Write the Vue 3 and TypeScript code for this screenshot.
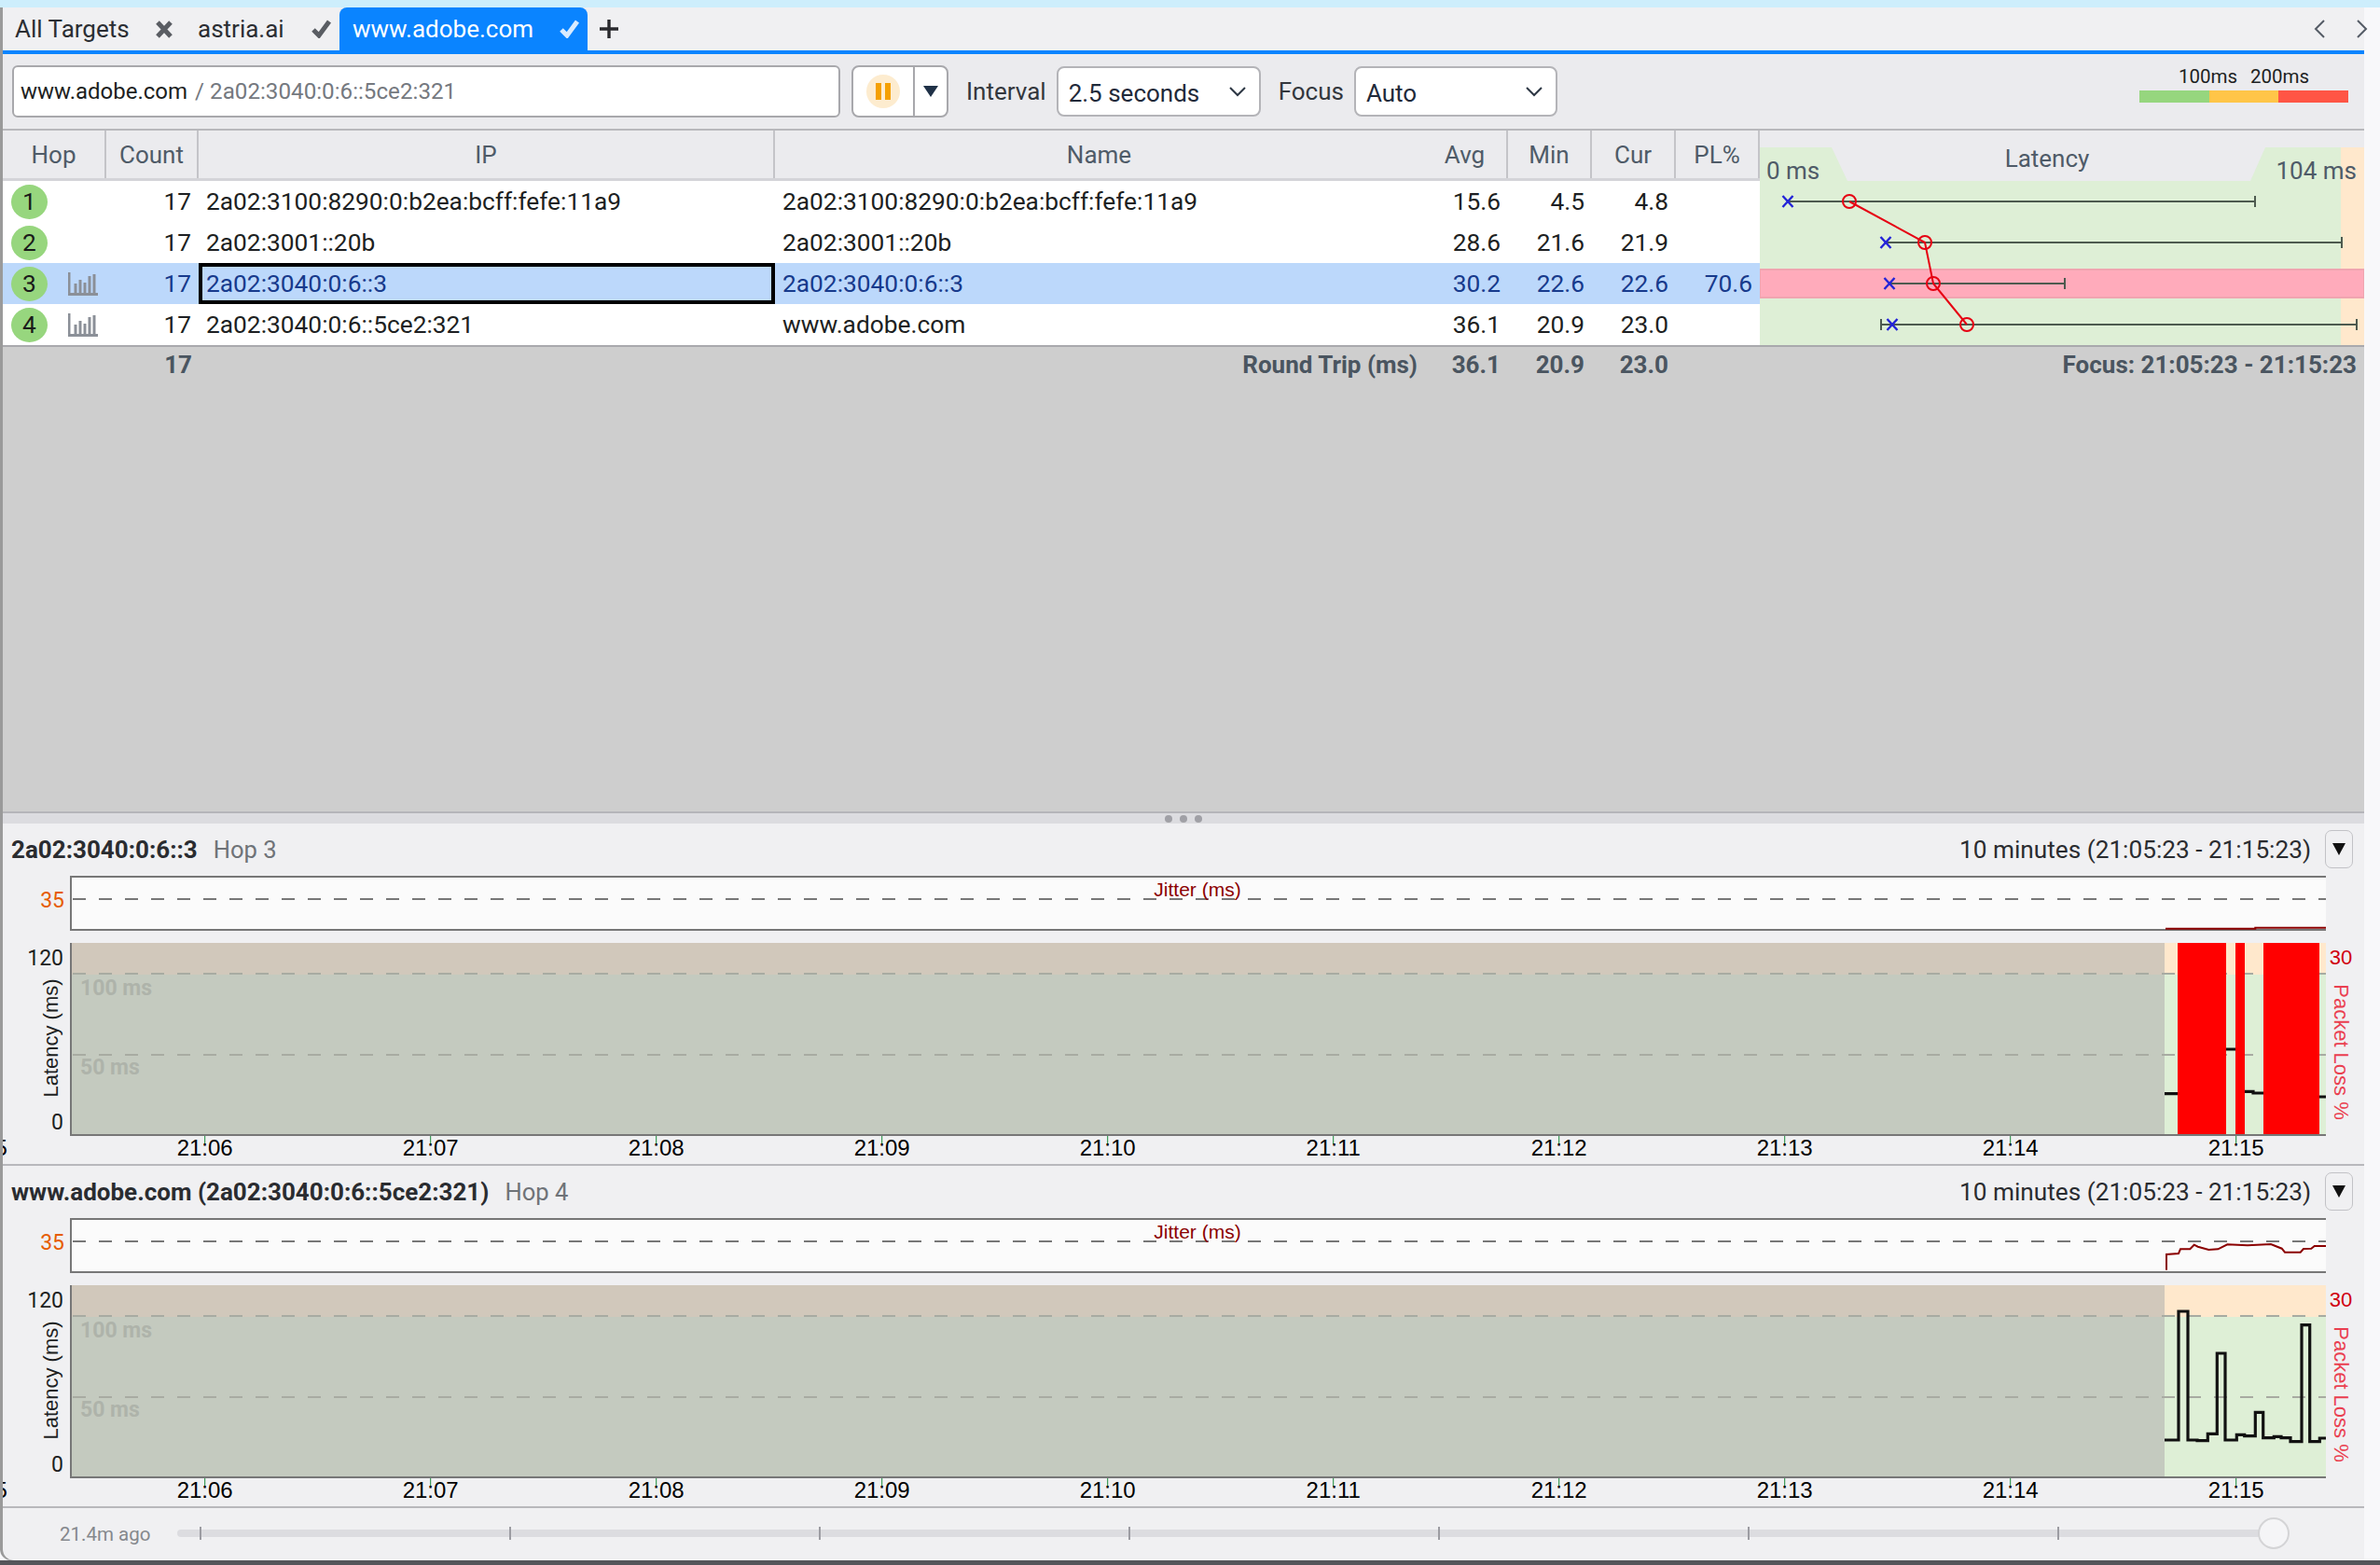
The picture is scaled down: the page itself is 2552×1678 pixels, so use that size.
<script setup lang="ts">
interface Hop {
  n: number
  chart: boolean
  count: number
  ip: string
  name: string
  avg: string
  min: string
  cur: string
  pl: string
  selected?: boolean
}

const hops: Hop[] = [
  { n: 1, chart: false, count: 17, ip: '2a02:3100:8290:0:b2ea:bcff:fefe:11a9', name: '2a02:3100:8290:0:b2ea:bcff:fefe:11a9', avg: '15.6', min: '4.5', cur: '4.8', pl: '' },
  { n: 2, chart: false, count: 17, ip: '2a02:3001::20b', name: '2a02:3001::20b', avg: '28.6', min: '21.6', cur: '21.9', pl: '' },
  { n: 3, chart: true, count: 17, ip: '2a02:3040:0:6::3', name: '2a02:3040:0:6::3', avg: '30.2', min: '22.6', cur: '22.6', pl: '70.6', selected: true },
  { n: 4, chart: true, count: 17, ip: '2a02:3040:0:6::5ce2:321', name: 'www.adobe.com', avg: '36.1', min: '20.9', cur: '23.0', pl: '' },
]

// latency bars in the table: y, low tick (optional), x mark, circle, high tick
const bars = [
  { y: 76, low: 0, x: 1917, c: 1983, high: 2418 },
  { y: 120, low: 0, x: 2022, c: 2064, high: 2511 },
  { y: 164, low: 0, x: 2026, c: 2073, high: 2214 },
  { y: 208, low: 2017, x: 2029, c: 2109, high: 2527 },
]

const trend = bars.map((b) => `${b.c},${b.y}`).join(' ')

const ticks = ['21:05', '21:06', '21:07', '21:08', '21:09', '21:10', '21:11', '21:12', '21:13', '21:14', '21:15'].map((t, i) => ({
  label: t,
  x: -22.3 + 242 * i,
}))

// points were read off 3x crops, so they stay in crop units from x=2200
const zx = (n: number) => 2200 + n / 3

const toPath = (pts: number[][], yBase: number) =>
  pts.map((p, i) => `${i ? 'L' : 'M'}${zx(p[0]).toFixed(1)} ${(yBase + p[1] / 3).toFixed(1)}`).join(' ')

const latency4 = [
  [363, 912], [408, 912], [408, 498], [438, 498], [438, 912], [468, 912], [468, 914], [502, 914], [502, 892], [532, 892],
  [532, 633], [558, 633], [558, 912], [595, 912], [595, 895], [620, 895], [620, 899], [655, 899], [655, 823], [680, 823],
  [680, 905], [715, 905], [715, 901], [738, 901], [738, 905], [768, 905], [768, 917], [804, 917], [804, 542], [830, 542],
  [830, 917], [862, 917], [862, 906], [882, 906],
]
const jitter4 = [
  [369, 365], [369, 315], [408, 312], [414, 298], [445, 298], [458, 284], [470, 290], [505, 300], [535, 298], [565, 283],
  [630, 286], [705, 282], [740, 296], [750, 308], [800, 308], [810, 297], [835, 296], [845, 288], [882, 288],
]
const latency3Segs = [
  [[363, 938], [405, 938]],
  [[561, 795], [591, 795]],
  [[621, 931], [648, 931], [648, 936], [681, 936]],
  [[861, 948], [882, 948]],
]
const jitter3 = [[366, 407], [655, 407], [655, 404], [882, 404]]

const panels = [
  {
    title: '2a02:3040:0:6::3',
    hop: 'Hop 3',
    jitter: toPath(jitter3, -78),
    latency: latency3Segs.map((s) => toPath(s, -78)).join(' '),
    lossBars: [
      { x: 2335, w: 52 },
      { x: 2397, w: 10 },
      { x: 2427, w: 60 },
    ],
  },
  {
    title: 'www.adobe.com (2a02:3040:0:6::5ce2:321)',
    hop: 'Hop 4',
    jitter: toPath(jitter4, -65),
    latency: toPath(latency4, -65),
    lossBars: [],
  },
]

const sliderTicks = [0, 1, 2, 3, 4, 5, 6].map((i) => 214 + 332 * i)
</script>

<template>
  <div class="page">
    <div class="top-strip"></div>
    <div class="app">
      <div class="tabbar">
        <div class="tab">
          <span>All Targets</span>
          <svg class="tab-icon" width="20" height="19" viewBox="0 0 20 19"><path d="m3 2 14 15M17 2 3 17" fill="none" stroke="#5a5d63" stroke-width="5" /></svg>
        </div>
        <div class="tab tab-second">
          <span>astria.ai</span>
          <svg class="tab-icon" width="23" height="20" viewBox="0 0 23 20"><path d="m3 11 6 6L20 2" fill="none" stroke="#5a5d63" stroke-width="5" /></svg>
        </div>
        <div class="tab tab-active">
          <span>www.adobe.com</span>
          <svg class="tab-icon" width="23" height="20" viewBox="0 0 23 20"><path d="m3 11 6 6L20 2" fill="none" stroke="#d8ebff" stroke-width="5" /></svg>
        </div>
        <svg class="tab-plus" width="22" height="22" viewBox="0 0 22 22"><path d="M11 1v20M1 11h20" stroke="#2a2a2e" stroke-width="3.4" /></svg>
        <div class="tab-arrows">
          <svg width="14" height="22" viewBox="0 0 14 22"><path d="M12 2 3 11l9 9" fill="none" stroke="#555c66" stroke-width="2" /></svg>
          <svg width="14" height="22" viewBox="0 0 14 22"><path d="m2 2 9 9-9 9" fill="none" stroke="#555c66" stroke-width="2" /></svg>
        </div>
      </div>

      <div class="toolbar">
        <div class="target-input"><span class="target-name">www.adobe.com</span><span class="target-ip"> / 2a02:3040:0:6::5ce2:321</span></div>
        <div class="pause-group">
          <div class="pause-btn"><span class="pause-glyph"><i></i><i></i></span></div>
          <div class="pause-drop"><span class="tri"></span></div>
        </div>
        <span class="tool-label">Interval</span>
        <div class="select select-interval">
          <span>2.5 seconds</span>
          <svg width="20" height="12" viewBox="0 0 20 12"><path d="m2 2 8 8 8-8" fill="none" stroke="#2d3744" stroke-width="2" /></svg>
        </div>
        <span class="tool-label">Focus</span>
        <div class="select select-focus">
          <span>Auto</span>
          <svg width="20" height="12" viewBox="0 0 20 12"><path d="m2 2 8 8 8-8" fill="none" stroke="#2d3744" stroke-width="2" /></svg>
        </div>
        <div class="legend">
          <div class="legend-labels"><span>100ms</span><span>200ms</span></div>
          <div class="legend-bar"><i class="lg-green"></i><i class="lg-orange"></i><i class="lg-red"></i></div>
        </div>
      </div>

      <div class="table-area">
        <div class="table-wrap">
          <div class="table-left">
            <div class="trow thead">
              <div class="th">Hop</div>
              <div class="th">Count</div>
              <div class="th">IP</div>
              <div class="th th-name">Name</div>
              <div class="th">Avg</div>
              <div class="th">Min</div>
              <div class="th">Cur</div>
              <div class="th th-last">PL%</div>
            </div>
            <div v-for="h in hops" :key="h.n" class="trow tbody" :class="{ selected: h.selected }">
              <div class="td td-hop">
                <span class="badge">{{ h.n }}</span>
                <svg v-if="h.chart" class="bars-icon" width="32" height="25" viewBox="0 0 32 25">
                  <path d="M1 0v23.5h31M8 12v10M13 8v14M18 11v11M23 4v18M28 2v20" fill="none" stroke="#8b9098" stroke-width="3" />
                </svg>
              </div>
              <div class="td num">{{ h.count }}</div>
              <div class="td td-ip" :class="{ focused: h.selected }">{{ h.ip }}</div>
              <div class="td td-ip">{{ h.name }}</div>
              <div class="td num">{{ h.avg }}</div>
              <div class="td num">{{ h.min }}</div>
              <div class="td num">{{ h.cur }}</div>
              <div class="td num">{{ h.pl }}</div>
            </div>
          </div>
          <svg class="latency" width="648" height="232" viewBox="1887 0 648 232">
            <rect x="1887" y="0" width="648" height="54" fill="#ebebee" />
            <path d="M1887 18H1964L1981 54H1887Z" fill="#deefd6" />
            <path d="M2429 18H2510V54H2413Z" fill="#deefd6" />
            <rect x="2510" y="18" width="25" height="212" fill="#ffe8cc" />
            <rect x="1887" y="54" width="623" height="176" fill="#deefd6" />
            <rect x="1887" y="149" width="648" height="30" fill="#ffabbb" stroke="#f0a5b0" stroke-width="2" />
            <text x="2195" y="39" class="lat-title" text-anchor="middle">Latency</text>
            <text x="1894" y="52" class="lat-scale">0 ms</text>
            <text x="2527" y="52" class="lat-scale" text-anchor="end">104 ms</text>
            <g v-for="b in bars" :key="b.y">
              <path :d="`M${b.low || b.x} ${b.y}H${b.high}M${b.high} ${b.y - 6}v12`" stroke="#4d5a4f" stroke-width="2" fill="none" />
              <path v-if="b.low" :d="`M${b.low} ${b.y - 6}v12`" stroke="#4d5a4f" stroke-width="2" fill="none" />
              <path :d="`M${b.x - 5.5} ${b.y - 6}l11 12m0 -12l-11 12`" stroke="#2323d8" stroke-width="2.4" fill="none" />
            </g>
            <polyline :points="trend" fill="none" stroke="#e60012" stroke-width="2" />
            <circle v-for="b in bars" :key="'c' + b.y" :cx="b.c" :cy="b.y" r="7" fill="none" stroke="#e60012" stroke-width="2" />
          </svg>
        </div>
        <div class="summary">
          <span class="sum-count">17</span>
          <span class="sum-label">Round Trip (ms)</span>
          <span class="sum-num">36.1</span>
          <span class="sum-num">20.9</span>
          <span class="sum-num">23.0</span>
          <span class="sum-focus">Focus: 21:05:23 - 21:15:23</span>
        </div>
        <div class="empty"></div>
      </div>

      <div class="splitter"><i></i><i></i><i></i></div>

      <div v-for="p in panels" :key="p.hop" class="panel">
        <div class="panel-head">
          <span class="panel-title">{{ p.title }}</span>
          <span class="panel-hop">{{ p.hop }}</span>
          <span class="panel-range">10 minutes (21:05:23 - 21:15:23)</span>
          <span class="panel-btn"><span class="tri tri-big"></span></span>
        </div>
        <svg class="chart" width="2532" height="310" viewBox="3 0 2532 310">
          <!-- jitter strip -->
          <rect x="75" y="2" width="2419" height="57" fill="#fbfbfb" />
          <path d="M75 2H2494M75 59H2494M76 2V59" fill="none" stroke="#777" stroke-width="2" />
          <line x1="78" y1="26" x2="2494" y2="26" stroke="#777" stroke-width="2" stroke-dasharray="14 14" />
          <text x="1284" y="23" class="jitter-label" text-anchor="middle">Jitter (ms)</text>
          <text x="69" y="35" class="jitter-val" text-anchor="end">35</text>
          <path :d="p.jitter" fill="none" stroke="#8b0000" stroke-width="2" />

          <!-- latency area -->
          <rect x="75" y="73" width="2246" height="34" fill="#d1c8bb" />
          <rect x="75" y="107" width="2246" height="171" fill="#c4cabf" />
          <rect x="2321" y="73" width="173" height="34" fill="#ffe8cc" />
          <rect x="2321" y="107" width="173" height="171" fill="#deefd6" />
          <line x1="78" y1="106" x2="2494" y2="106" stroke="#a8aba2" stroke-width="2" stroke-dasharray="14 14" />
          <line x1="78" y1="193" x2="2494" y2="193" stroke="#a8aba2" stroke-width="2" stroke-dasharray="14 14" />
          <text x="86" y="129" class="grid-label">100 ms</text>
          <text x="86" y="214" class="grid-label">50 ms</text>
          <rect v-for="b in p.lossBars" :key="b.x" :x="b.x" y="73" :width="b.w" height="205" fill="#ff0000" />
          <path :d="p.latency" fill="none" stroke="#111" stroke-width="3.2" />
          <path d="M76 73V279H2494" fill="none" stroke="#777" stroke-width="2" />

          <text x="68" y="97" class="axis" text-anchor="end">120</text>
          <text x="68" y="273" class="axis" text-anchor="end">0</text>
          <text transform="translate(62 175) rotate(-90)" class="axis-title" text-anchor="middle">Latency (ms)</text>
          <text x="2510" y="96" class="loss-max" text-anchor="middle">30</text>
          <text transform="translate(2503 190) rotate(90)" class="loss-title" text-anchor="middle">Packet Loss %</text>

          <g v-for="t in ticks" :key="t.label">
            <line :x1="t.x" y1="280" :x2="t.x" y2="289" stroke="#1a8a3a" stroke-width="1" />
            <text :x="t.x" y="301" class="tick" text-anchor="middle">{{ t.label }}</text>
          </g>
        </svg>
      </div>

      <div class="slider-row">
        <span class="slider-label">21.4m ago</span>
        <div class="slider-track">
          <i v-for="x in sliderTicks" :key="x" class="slider-tick" :style="{ left: x - 190 + 'px' }"></i>
          <span class="slider-handle"></span>
        </div>
      </div>
    </div>
    <div class="bottom-strip"></div>
  </div>
</template>

<style>
html,
body {
  margin: 0;
  background: #f8f8fa;
  overflow: hidden;
}
</style>

<style scoped>
.page {
  width: 2552px;
  height: 1678px;
  display: flex;
  flex-direction: column;
  font-family: Roboto, 'Liberation Sans', sans-serif;
  color: #1d1f22;
  background: #f8f8fa;
  overflow: hidden;
}

.top-strip {
  height: 8px;
  flex: none;
  background: #cdeefc;
}

.app {
  width: 2532px;
  height: 1665px;
  margin-left: 3px;
  flex: none;
  background: #f0f0f2;
  display: flex;
  flex-direction: column;
  box-shadow: -3px 0 0 #9a9a9a;
  border-bottom-left-radius: 12px;
}

.bottom-strip {
  flex: 1;
  background: #55555a;
}

.tabbar {
  height: 46px;
  flex: none;
  display: flex;
  align-items: stretch;
  font-size: 26px;
  border-bottom: 4px solid #0a84ff;
  color: #2b2e33;
}

.tab {
  display: flex;
  align-items: center;
  justify-content: space-between;
  padding-left: 13px;
  padding-right: 13px;
  width: 196px;
  box-sizing: border-box;
}

.tab-second {
  width: 165px;
  padding-left: 13px;
  padding-right: 8px;
}

.tab-icon {
  flex: none;
}

.tab-active {
  width: 266px;
  padding-left: 14px;
  padding-right: 8px;
  background: #0a84ff;
  color: #fff;
  border-radius: 8px 8px 0 0;
}

.tab-plus {
  align-self: center;
  margin-left: 12px;
}

.tab-arrows {
  margin-left: auto;
  align-self: center;
  display: flex;
  gap: 32px;
  margin-right: -5px;
}

.toolbar {
  height: 80px;
  flex: none;
  box-sizing: border-box;
  background: #ebebee;
  display: flex;
  align-items: center;
  padding-left: 10px;
  font-size: 26px;
}

.target-input {
  width: 888px;
  height: 56px;
  box-sizing: border-box;
  background: #fff;
  border: 2px solid #a8a8ac;
  border-radius: 6px;
  display: flex;
  align-items: center;
  padding-left: 7px;
  font-size: 24px;
  white-space: pre;
}

.target-ip {
  margin-left: 2px;
  color: #75797f;
  font-size: 24.2px;
}

.pause-group {
  margin-left: 12px;
  width: 104px;
  height: 56px;
  box-sizing: border-box;
  display: flex;
  background: #fff;
  border: 2px solid #a8a8ac;
  border-radius: 8px;
}

.pause-btn {
  width: 64px;
  display: flex;
  align-items: center;
  justify-content: center;
  border-right: 2px solid #a8a8ac;
}

.pause-glyph {
  width: 36px;
  height: 36px;
  border-radius: 50%;
  background: #fdeccf;
  display: flex;
  align-items: center;
  justify-content: center;
  gap: 4px;
}

.pause-glyph i {
  width: 6px;
  height: 18px;
  background: #f5a000;
}

.pause-drop {
  flex: 1;
  display: flex;
  align-items: center;
  justify-content: center;
}

.tri {
  width: 0;
  height: 0;
  border-left: 8px solid transparent;
  border-right: 8px solid transparent;
  border-top: 12px solid #1f3147;
}

.tool-label {
  margin-left: 19px;
  color: #33373d;
}

.select {
  height: 54px;
  box-sizing: border-box;
  background: #fff;
  border: 2px solid #b4b4b8;
  border-radius: 8px;
  display: flex;
  align-items: center;
  justify-content: space-between;
  padding: 3px 13px 0 11px;
  margin-left: 11px;
  font-size: 26px;
  color: #1f2a3a;
}

.select svg {
  margin-top: -3px;
}

.select-interval {
  width: 219px;
}

.select-focus {
  width: 218px;
  margin-left: 11px;
}

.legend {
  margin-left: auto;
  width: 224px;
  margin-right: 17px;
  display: flex;
  flex-direction: column;
  align-self: flex-start;
  margin-top: 12px;
}

.legend-labels {
  display: flex;
  justify-content: center;
  gap: 14px;
  font-size: 20.5px;
  line-height: 25px;
  margin-bottom: 2px;
}

.legend-bar {
  display: flex;
  height: 13px;
}

.legend-bar i {
  flex: 1;
}

.lg-green {
  background: #96d67e;
}

.lg-orange {
  background: #ffc548;
}

.lg-red {
  background: #ff5545;
}

.table-area {
  height: 732px;
  flex: none;
  box-sizing: border-box;
  background: #cecece;
  border-top: 2px solid #b8b8bc;
  display: flex;
  flex-direction: column;
}

.table-wrap {
  display: flex;
  height: 230px;
  flex: none;
}

.table-left {
  width: 1884px;
  flex: none;
}

.latency {
  display: block;
  flex: none;
}

.trow {
  display: grid;
  grid-template-columns: 111px 99px 618px 695px 91px 90px 90px 90px;
  box-sizing: border-box;
}

.thead {
  height: 54px;
  background: #ebebee;
  border-bottom: 3px solid #d4d4d8;
  color: #4f5b68;
  font-size: 26px;
}

.th {
  display: flex;
  align-items: center;
  justify-content: center;
  border-right: 2px solid #c4c4c8;
}

.th-name {
  border-right: 0;
}

.tbody {
  height: 44px;
  background: #fff;
  font-size: 26.3px;
}

.tbody.selected {
  background: #bcd8fb;
  color: #173a8c;
}

.td {
  display: flex;
  align-items: center;
  min-width: 0;
  box-sizing: border-box;
  white-space: nowrap;
}

.td-hop {
  padding-left: 9px;
  gap: 22px;
}

.badge {
  width: 39px;
  height: 37px;
  flex: none;
  border-radius: 50%;
  background: #97d67e;
  color: #1a1a1a;
  display: flex;
  align-items: center;
  justify-content: center;
}

.bars-icon {
  flex: none;
}

.num {
  justify-content: flex-end;
  padding-right: 8px;
}

.td-ip {
  padding-left: 8px;
}

.focused {
  border: 4px solid #000;
  padding-left: 4px;
}

.lat-title,
.lat-scale {
  font-family: Roboto, sans-serif;
  font-size: 26px;
  fill: #4f5b68;
}

.summary {
  height: 38px;
  flex: none;
  border-top: 2px solid #a9a9ad;
  display: grid;
  grid-template-columns: 205px 1321px 91px 90px 90px 1fr;
  align-items: center;
  font-weight: 700;
  font-size: 26px;
  color: #4a5560;
  box-sizing: content-box;
}

.sum-count,
.sum-num,
.sum-label {
  text-align: right;
}

.sum-count {
  padding-right: 2px;
}

.sum-num {
  padding-right: 11px;
}

.sum-label {
  padding-right: 9px;
}

.sum-focus {
  text-align: right;
  padding-right: 8px;
}

.empty {
  flex: 1;
}

.splitter {
  height: 13px;
  flex: none;
  background: #dcdce0;
  border-top: 2px solid #b5b5ba;
  box-sizing: border-box;
  display: flex;
  justify-content: center;
  align-items: center;
  gap: 8px;
}

.splitter i {
  width: 8px;
  height: 8px;
  border-radius: 50%;
  background: #a0a0a6;
}

.panel {
  flex: none;
  border-bottom: 2px solid #b8b8bc;
}

.panel-head {
  height: 55px;
  display: flex;
  align-items: center;
  padding-left: 9px;
  padding-right: 12px;
  box-sizing: border-box;
}

.panel-title {
  font-weight: 700;
  font-size: 26px;
  color: #2a2c30;
}

.panel-hop {
  margin-left: 17px;
  font-size: 25.6px;
  color: #6f7378;
}

.panel-range {
  margin-left: auto;
  font-size: 26.2px;
  color: #2a2c30;
}

.panel-btn {
  width: 30px;
  height: 41px;
  margin-left: 15px;
  box-sizing: border-box;
  border: 1px solid #c2c2c6;
  border-radius: 7px;
  display: flex;
  align-items: center;
  justify-content: center;
}

.tri-big {
  border-left-width: 7px;
  border-right-width: 7px;
  border-top: 13px solid #111;
}

.chart {
  display: block;
  overflow: hidden;
}

.jitter-label {
  font-family: 'Liberation Sans', sans-serif;
  font-size: 21px;
  fill: #8b0000;
}

.jitter-val {
  font-family: Roboto, sans-serif;
  font-size: 23px;
  fill: #e65c00;
}

.grid-label {
  font-family: Roboto, sans-serif;
  font-weight: 700;
  font-size: 23px;
  fill: #aeb3aa;
}

.axis {
  font-family: Roboto, sans-serif;
  font-size: 23px;
  fill: #1d1f22;
}

.axis-title {
  font-family: 'Liberation Sans', sans-serif;
  font-size: 22px;
  fill: #1d1f22;
}

.loss-max {
  font-family: 'Liberation Sans', sans-serif;
  font-size: 22px;
  fill: #d0000f;
}

.loss-title {
  font-family: 'Liberation Sans', sans-serif;
  font-size: 22px;
  fill: #ea3f50;
}

.tick {
  font-family: 'Liberation Sans', sans-serif;
  font-size: 24px;
  fill: #000;
}

.slider-row {
  flex: 1;
  position: relative;
  display: flex;
  align-items: center;
}

.slider-label {
  margin-left: 61px;
  font-size: 20.5px;
  color: #85888d;
}

.slider-track {
  position: absolute;
  left: 187px;
  top: 23px;
  width: 2233px;
  height: 8px;
  border-radius: 4px 0 0 4px;
  background: #dcdce0;
}

.slider-tick {
  position: absolute;
  top: -3px;
  width: 2px;
  height: 14px;
  background: #9c9ca2;
}

.slider-handle {
  position: absolute;
  left: 2231px;
  top: -13px;
  width: 34px;
  height: 34px;
  box-sizing: border-box;
  border-radius: 50%;
  background: #f5f5f7;
  border: 2px solid #d4d4d6;
}
</style>
